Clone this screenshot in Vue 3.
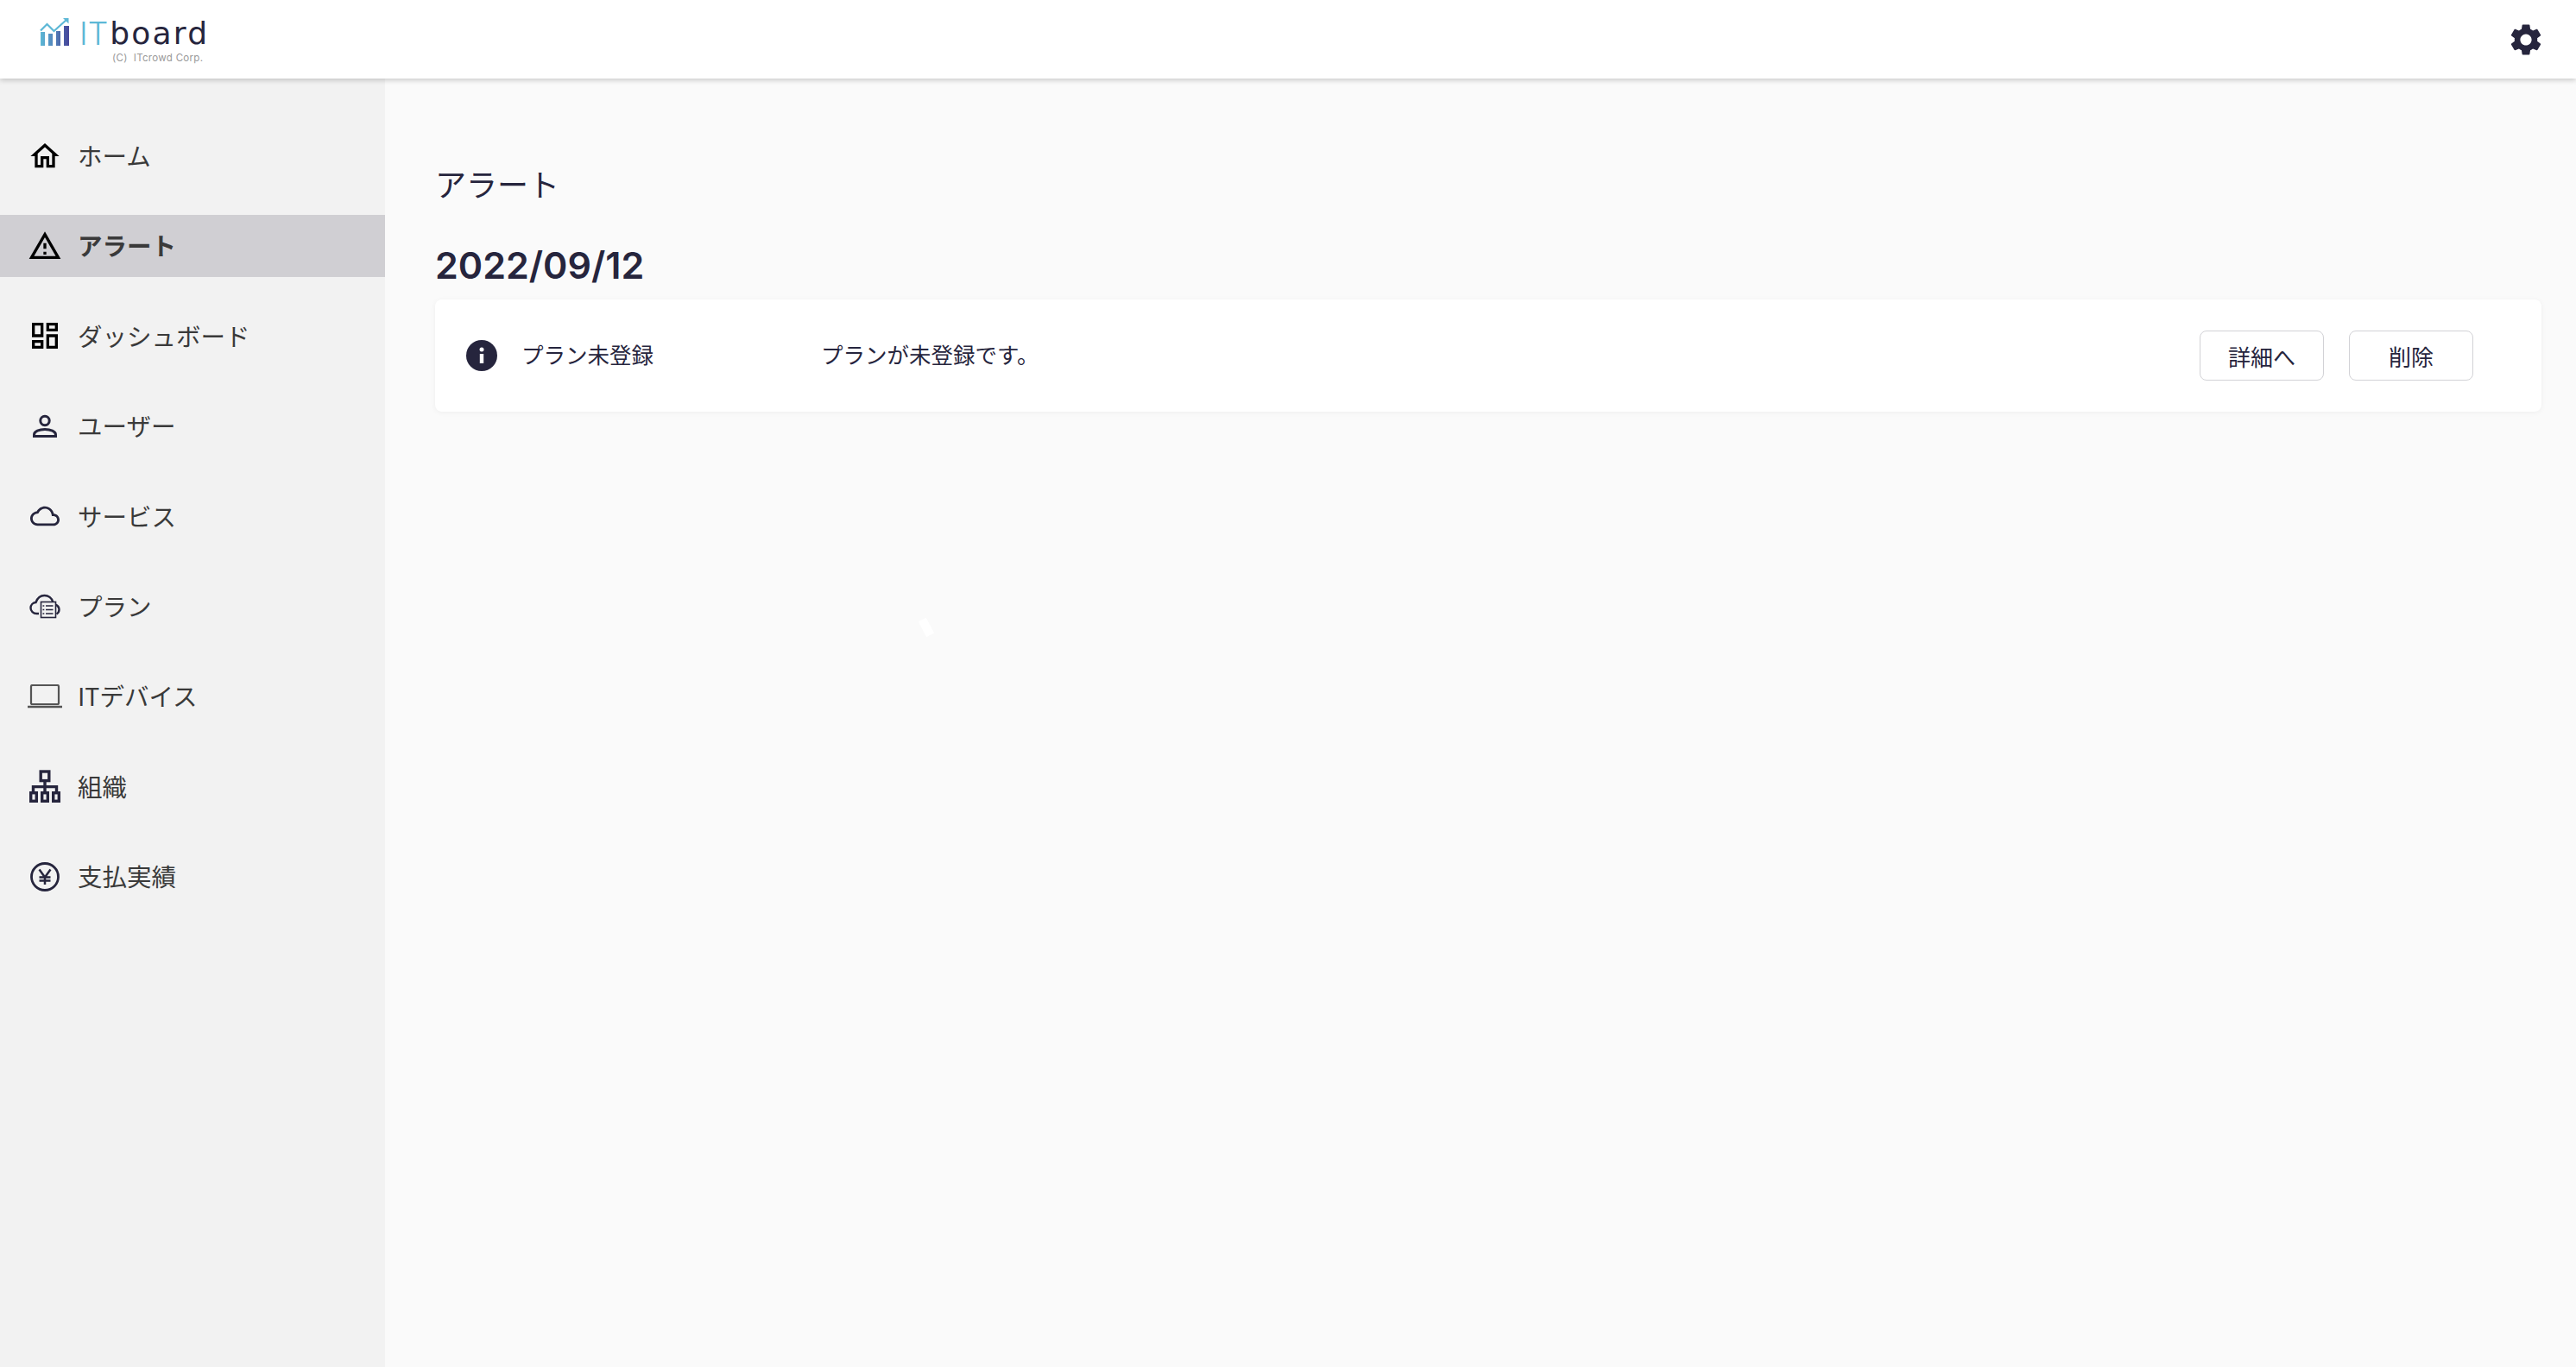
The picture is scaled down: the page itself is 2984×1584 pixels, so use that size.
<script setup>
const navItems = [
  { key: 'home', label: 'ホーム' },
  { key: 'alert', label: 'アラート', active: true },
  { key: 'dashboard', label: 'ダッシュボード' },
  { key: 'user', label: 'ユーザー' },
  { key: 'service', label: 'サービス' },
  { key: 'plan', label: 'プラン' },
  { key: 'device', label: 'ITデバイス' },
  { key: 'org', label: '組織' },
  { key: 'payment', label: '支払実績' }
]
</script>

<template>
  <div class="page">
    <header class="topbar">
      <div class="brand">
        <div class="brand-row">
          <svg class="brand-mark" width="36" height="34" viewBox="0 0 36 34">
            <defs>
              <linearGradient id="barGrad" x1="0" x2="1" y1="0" y2="0">
                <stop offset="0" stop-color="#5db8d6" />
                <stop offset="1" stop-color="#46469a" />
              </linearGradient>
            </defs>
            <path d="M1 17h5v16H1zM10 19h5v14h-5zM19 16h5v17h-5zM28 10h6v23h-6z" fill="url(#barGrad)" />
            <path d="M1 15.500L8.500 8l8 8L32 2" fill="none" stroke="#5db8d6" stroke-width="2.200" />
            <path d="M27 1h6.500v6.500z" fill="#5db8d6" />
          </svg>
          <span class="brand-it">IT</span><span class="brand-board">board</span>
        </div>
        <div class="brand-copy">(C)&nbsp; ITcrowd Corp.</div>
      </div>
      <svg class="gear" width="44" height="44" viewBox="0 0 24 24" fill="#26253d">
        <path d="M19.140 12.940c.04-.3.060-.61.060-.94 0-.32-.02-.64-.07-.94l2.030-1.580a.49.49 0 0 0 .12-.61l-1.920-3.320a.488.488 0 0 0-.59-.22l-2.390.96c-.5-.38-1.030-.7-1.620-.94l-.36-2.540a.484.484 0 0 0-.48-.41h-3.840c-.24 0-.43.170-.47.41l-.36 2.540c-.59.24-1.130.57-1.620.94l-2.390-.96c-.22-.08-.47 0-.59.22L2.740 8.870c-.12.21-.08.47.12.61l2.030 1.580c-.05.3-.09.63-.09.94s.02.64.07.94l-2.030 1.580a.49.49 0 0 0-.12.61l1.920 3.320c.12.22.37.29.59.22l2.390-.96c.5.38 1.030.7 1.620.94l.36 2.540c.05.24.24.41.48.41h3.840c.24 0 .44-.17.47-.41l.36-2.540c.59-.24 1.130-.56 1.620-.94l2.390.96c.22.08.47 0 .59-.22l1.920-3.320c.12-.22.07-.47-.12-.61l-2.010-1.580zM12 15.600c-1.980 0-3.600-1.620-3.600-3.600s1.620-3.600 3.600-3.600 3.600 1.620 3.600 3.600-1.620 3.600-3.600 3.600z" />
      </svg>
    </header>

    <div class="body">
      <aside class="sidebar">
        <nav class="nav">
          <a v-for="item in navItems" :key="item.key" class="nav-item" :class="{ active: item.active }">
            <span class="nav-icon">
              <svg v-if="item.key === 'home'" width="40" height="40" viewBox="0 0 24 24" fill="#000">
                <path d="M12 5.690l5 4.500V18h-2v-6H9v6H7v-7.810l5-4.500M12 3L2 12h3v8h6v-6h2v6h6v-8h3L12 3z" />
              </svg>
              <svg v-else-if="item.key === 'alert'" width="40" height="40" viewBox="0 0 24 24" fill="#000">
                <path d="M12 5.990L19.530 19H4.470L12 5.990M12 2L1 21h22L12 2zm1 14h-2v2h2v-2zm0-6h-2v4h2v-4z" />
              </svg>
              <svg v-else-if="item.key === 'dashboard'" width="40" height="40" viewBox="0 0 24 24" fill="#000">
                <path d="M19 5v2h-4V5h4M9 5v6H5V5h4m10 8v6h-4v-6h4M9 17v2H5v-2h4M21 3h-8v6h8V3zM11 3H3v10h8V3zm10 8h-8v10h8V11zm-10 4H3v6h8v-6z" />
              </svg>
              <svg v-else-if="item.key === 'user'" width="40" height="40" viewBox="0 0 40 40" fill="none" stroke="#26253d" stroke-width="3">
                <circle cx="20" cy="13.500" r="5.200" />
                <path d="M7.500 31.500v-1.800c0-3.700 6-6.200 12.500-6.200s12.500 2.500 12.500 6.200v1.800z" />
              </svg>
              <svg v-else-if="item.key === 'service'" width="34" height="34" viewBox="0 0 24 24" fill="#26253d">
                <path d="M12 6c2.620 0 4.880 1.860 5.390 4.430l.3 1.500 1.530.11c1.560.1 2.780 1.410 2.780 2.960 0 1.650-1.350 3-3 3H6c-2.210 0-4-1.790-4-4 0-2.050 1.530-3.760 3.560-3.970l1.070-.11.5-.95C8.080 7.140 9.940 6 12 6m0-2C9.110 4 6.600 5.640 5.350 8.040 2.340 8.360 0 10.910 0 14c0 3.310 2.690 6 6 6h13c2.760 0 5-2.240 5-5 0-2.640-2.050-4.780-4.650-4.960C18.670 6.590 15.640 4 12 4z" />
              </svg>
              <svg v-else-if="item.key === 'plan'" width="36" height="30" viewBox="0 0 36 30" fill="none" stroke="#26253d" stroke-width="2.400">
                <path d="M11 24H8.500C4.500 24 1.500 21 1.500 17.500c0-3.500 2.700-6.200 6-6.500C9.500 5.500 13 3 17.500 3c4.500 0 8.500 3 9.700 7.500" />
                <path d="M30 13.500c2.800 1 4.500 3.300 4.500 6 0 2.200-1.300 4-3 5" />
                <rect x="13.500" y="10.500" width="17" height="18" fill="#f2f2f2" stroke-width="1.600" />
                <path d="M19 15h8.500M19 19.500h8.500M19 24h8.500M15.500 15h1.800M15.500 19.500h1.800M15.500 24h1.800" stroke-width="1.600" />
              </svg>
              <svg v-else-if="item.key === 'device'" width="40" height="28" viewBox="0 0 40 28" fill="none" stroke="#555">
                <rect x="4" y="1" width="32" height="22" rx="1.500" stroke-width="2.200" />
                <path d="M0 26h40" stroke-width="2.600" />
              </svg>
              <svg v-else-if="item.key === 'org'" width="38" height="38" viewBox="0 0 38 38" fill="none" stroke="#26253d" stroke-width="3.400">
                <rect x="14.200" y="2" width="9.600" height="10.600" />
                <path d="M19 12.600v7M5.500 25v-5.400h27V25M19 19.600V25" />
                <rect x="2.700" y="26.700" width="6.600" height="9.600" />
                <rect x="15.700" y="26.700" width="6.600" height="9.600" />
                <rect x="28.700" y="26.700" width="6.600" height="9.600" />
              </svg>
              <svg v-else width="36" height="36" viewBox="0 0 36 36" fill="none" stroke="#26253d">
                <circle cx="18" cy="18" r="15.500" stroke-width="2.800" />
                <path d="M11.500 9.500L18 18.500l6.500-9M18 18.500V27M11.500 18.500h13M11.500 22.500h13" stroke-width="2.500" />
              </svg>
            </span>
            <span class="nav-label">{{ item.label }}</span>
          </a>
        </nav>
      </aside>

      <main class="main">
        <h1 class="title">アラート</h1>
        <h2 class="date">2022/09/12</h2>
        <section class="card">
          <svg class="info" width="36" height="36" viewBox="0 0 36 36">
            <circle cx="18" cy="18" r="18" fill="#26253d" />
            <rect x="15.800" y="16" width="4.400" height="11" fill="#fff" />
            <circle cx="18" cy="11" r="2.500" fill="#fff" />
          </svg>
          <span class="alert-name">プラン未登録</span>
          <span class="alert-message">プランが未登録です。</span>
          <div class="actions">
            <button class="btn">詳細へ</button>
            <button class="btn">削除</button>
          </div>
        </section>
        <span class="glint"></span>
      </main>
    </div>
  </div>
</template>

<style>
html, body { margin: 0; padding: 0; background: #fafafa; }
</style>

<style scoped>
.page {
  width: 2984px;
  height: 1584px;
  display: flex;
  flex-direction: column;
  overflow: hidden;
  font-family: "Noto Sans CJK JP", "Inter", sans-serif;
  color: #26253d;
}
.topbar {
  height: 91px;
  flex: none;
  background: #fff;
  box-shadow: 0 2px 6px rgba(0, 0, 0, 0.2);
  position: relative;
  z-index: 2;
  display: flex;
  align-items: center;
  justify-content: space-between;
  padding: 0 36px 0 46px;
  box-sizing: border-box;
}
.brand { display: flex; flex-direction: column; margin-top: 3px; }
.brand-row { display: flex; align-items: flex-end; height: 34px; }
.brand-mark { margin-right: 10px; }
.brand-it {
  font-family: "Inter", sans-serif;
  font-size: 37px;
  font-weight: 300;
  color: #5db8d6;
  line-height: 30px;
  margin-right: 2px;
}
.brand-board {
  font-family: "DejaVu Sans", sans-serif;
  font-size: 36px;
  font-weight: 400;
  color: #26253d;
  letter-spacing: 2.200px;
  line-height: 30px;
}
.brand-copy {
  font-family: "Inter", sans-serif;
  font-size: 11.500px;
  line-height: 14px;
  color: #999;
  margin: 6px 0 0 84px;
  letter-spacing: 0.3px;
}
.body { flex: 1; display: flex; min-height: 0; }
.sidebar { width: 446px; flex: none; background: #f2f2f2; }
.nav { display: flex; flex-direction: column; gap: 32.400px; padding-top: 53.500px; }
.nav-item {
  height: 72px;
  display: flex;
  align-items: center;
  font-size: 28.500px;
  color: #3a3a3a;
  padding-left: 32px;
  gap: 18px;
}
.nav-label { position: relative; top: -1px; }
.nav-item.active { background: #d0cfd3; font-weight: 700; }
.nav-icon {
  width: 40px;
  height: 40px;
  display: flex;
  align-items: center;
  justify-content: center;
  flex: none;
}
.main {
  flex: 1;
  background: #fafafa;
  padding: 97px 40px 0 58px;
  position: relative;
  min-width: 0;
}
.title {
  margin: 0;
  font-size: 36px;
  line-height: 48px;
  font-weight: 400;
}
.date {
  margin: 47px 0 0;
  font-family: "Inter", sans-serif;
  font-size: 43px;
  line-height: 48px;
  font-weight: 600;
}
.card {
  margin-top: 16px;
  height: 130px;
  box-sizing: border-box;
  background: #fff;
  border-radius: 8px;
  box-shadow: 0 1px 6px rgba(0, 0, 0, 0.05);
  display: flex;
  align-items: center;
  padding: 0 79px 0 36px;
  font-size: 25.500px;
}
.alert-name { margin-left: 28px; margin-bottom: 5px; width: 347px; flex: none; }
.alert-message { flex: 1; margin-bottom: 5px; }
.actions { display: flex; gap: 29px; }
.btn {
  width: 144px;
  height: 58px;
  background: #fff;
  border: 1.500px solid #d2d2d6;
  border-radius: 8px;
  font-family: inherit;
  font-size: 26px;
  color: #26253d;
  padding: 0;
}
.glint {
  position: absolute;
  left: 622px;
  top: 626px;
  width: 10px;
  height: 20px;
  background: #fff;
  transform: rotate(-28deg);
}
</style>
